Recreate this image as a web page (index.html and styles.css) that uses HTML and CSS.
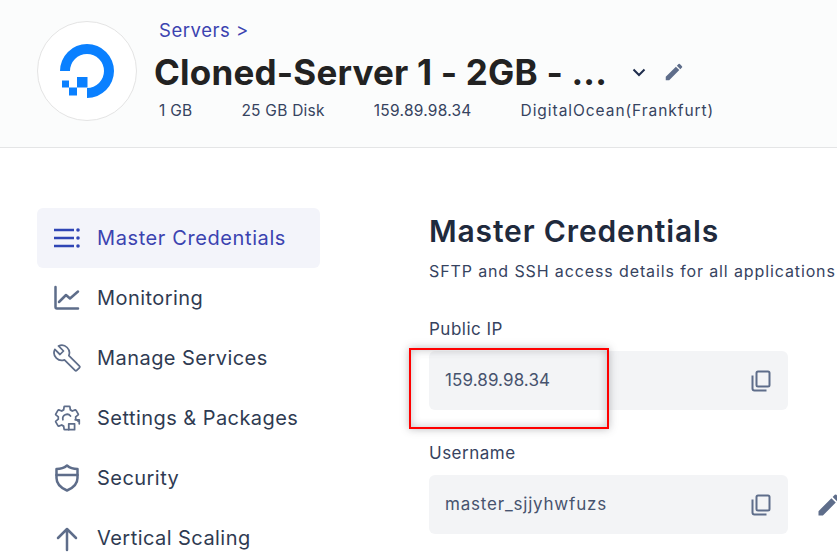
FILE: index.html
```html
<!DOCTYPE html>
<html lang="en">
<head>
    <meta charset="UTF-8">
    <meta name="viewport" content="width=device-width, initial-scale=1.0">
    <title>Master Credentials</title>
    <link rel="stylesheet" href="styles.css">
</head>
<body>
    <header class="server-header">
        <div class="logo-circle">
            <svg class="logo" viewBox="0 0 54 54">
                <path d="M0 27A27 27 0 1 1 27 54V44A17 17 0 1 0 10 27Z"/>
                <rect x="17" y="33" width="10.5" height="10.5"/>
                <rect x="9" y="43.5" width="8" height="8"/>
                <rect x="2" y="36.5" width="7" height="7"/>
            </svg>
        </div>
        <div class="server-info">
            <a class="breadcrumb">Servers &gt;</a>
            <div class="title-row">
                <h1 class="server-name">Cloned-Server 1 - 2GB - ...</h1>
                <svg class="chevron" viewBox="0 0 14 9"><path d="M1.5 1.5L7 7l5.5-5.5"/></svg>
                <svg class="pencil pencil-small" viewBox="0 0 24 24"><path d="M3 17.25V21h3.75L17.81 9.94l-3.75-3.75L3 17.25zM20.71 7.04a1 1 0 0 0 0-1.41l-2.34-2.34a1 1 0 0 0-1.41 0l-1.83 1.83 3.75 3.75 1.83-1.83z"/></svg>
            </div>
            <div class="meta">
                <span>1 GB</span>
                <span>25 GB Disk</span>
                <span>159.89.98.34</span>
                <span class="provider">DigitalOcean(Frankfurt)</span>
            </div>
        </div>
    </header>

    <div class="content">
        <nav class="sidebar">
            <a class="nav-item active">
                <svg class="nav-icon" viewBox="0 0 28 28"><path d="M1 6h20M1 14h20M1 22h20"/><circle class="dot" cx="25" cy="6" r="1.8"/><circle class="dot" cx="25" cy="14" r="1.8"/><circle class="dot" cx="25" cy="22" r="1.8"/></svg>
                Master Credentials
            </a>
            <a class="nav-item">
                <svg class="nav-icon" viewBox="0 0 28 28"><path d="M2.500 3v20a1.500 1.500 0 0 0 1.500 1.500h21"/><path d="M6 18l7-7 4 3.500 8-7"/></svg>
                Monitoring
            </a>
            <a class="nav-item">
                <svg class="nav-icon" viewBox="0 0 24 24"><path class="thin" d="M22.700 19l-9.100-9.100c.9-2.300.4-5-1.500-6.900-2-2-5-2.400-7.400-1.300L9 6 6 9 1.600 4.700C.4 7.100.9 10.100 2.900 12.100c1.900 1.900 4.600 2.400 6.900 1.500l9.100 9.100c.4.4 1 .4 1.400 0l2.300-2.300c.5-.4.5-1.100.1-1.400z"/></svg>
                Manage Services
            </a>
            <a class="nav-item">
                <svg class="nav-icon" viewBox="0 0 24 24">
                    <path class="thin" d="M19.430 12.980c.04-.32.07-.64.07-.98s-.03-.66-.07-.98l2.110-1.650c.19-.15.24-.42.12-.64l-2-3.460c-.12-.22-.39-.3-.61-.22l-2.490 1c-.52-.4-1.080-.73-1.690-.98l-.38-2.650C14.460 2.180 14.250 2 14 2h-4c-.25 0-.46.18-.49.42l-.38 2.650c-.61.25-1.170.59-1.690.98l-2.490-1c-.23-.09-.49 0-.61.22l-2 3.460c-.13.22-.07.49.12.64l2.110 1.650c-.04.32-.07.65-.07.98s.03.66.07.98l-2.110 1.650c-.19.15-.24.42-.12.64l2 3.460c.12.22.39.3.61.22l2.490-1c.52.4 1.080.73 1.690.98l.38 2.650c.03.24.24.42.49.42h4c.25 0 .46-.18.49-.42l.38-2.650c.61-.25 1.170-.59 1.690-.98l2.490 1c.23.09.49 0 .61-.22l2-3.460c.12-.22.07-.49-.12-.64l-2.110-1.650z"/>
                    <rect class="mask" x="14" y="15.500" width="10" height="8.500"/>
                    <path class="thin" d="M8.500 13.500a3.700 3.700 0 0 1 6.500-3.200"/>
                    <rect class="thin" x="13.500" y="17" width="5" height="5"/>
                    <path class="thin" d="M19 13.500h3.500v3.500"/>
                </svg>
                Settings &amp; Packages
            </a>
            <a class="nav-item">
                <svg class="nav-icon" viewBox="0 0 28 28"><path d="M14 1.500c3 2.500 7 3.500 10.500 3.500v9c0 6-4.500 10-10.500 12.500C8 24 3.500 20 3.500 14V5C7 5 11 4 14 1.500z"/><path d="M3.500 11h21"/></svg>
                Security
            </a>
            <a class="nav-item">
                <svg class="nav-icon" viewBox="0 0 28 28"><path d="M14 26V5M5 14l9-9 9 9"/></svg>
                Vertical Scaling
            </a>
        </nav>

        <main class="credentials">
            <h2 class="section-title">Master Credentials</h2>
            <p class="section-sub">SFTP and SSH access details for all applications</p>

            <label class="field-label">Public IP</label>
            <div class="field-row">
                <div class="field">
                    <span class="value-ip">159.89.98.34</span>
                    <svg class="copy" viewBox="0 0 20 22"><rect x="5.500" y="1.500" width="13" height="15" rx="1.500"/><path d="M1.500 5.500v13a2 2 0 0 0 2 2h12"/></svg>
                </div>
            </div>

            <label class="field-label">Username</label>
            <div class="field-row">
                <div class="field">
                    <span class="value-user">master_sjjyhwfuzs</span>
                    <svg class="copy" viewBox="0 0 20 22"><rect x="5.500" y="1.500" width="13" height="15" rx="1.500"/><path d="M1.500 5.500v13a2 2 0 0 0 2 2h12"/></svg>
                </div>
                <svg class="pencil pencil-large" viewBox="0 0 24 24"><path d="M3 17.250V21h3.750L17.810 9.940l-3.750-3.750L3 17.250zM20.710 7.040a1 1 0 0 0 0-1.410l-2.340-2.340a1 1 0 0 0-1.410 0l-1.830 1.830 3.750 3.750 1.830-1.830z"/></svg>
            </div>
        </main>
    </div>

    <div class="highlight"></div>
</body>
</html>
```

FILE: styles.css
```css
html, body {
    height: 100%;
    overflow: hidden;
}
body {
    margin: 0;
    position: relative;
    background-color: #fff;
    color: #2f3b52;
    font-family: Inter, "Liberation Sans", sans-serif;
}
.server-header {
    display: flex;
    height: 129px;
    padding: 18px 0 0 37px;
    background-color: #fbfcfc;
    border-bottom: 1px solid #e4e5e6;
}
.logo-circle {
    width: 98px;
    height: 98px;
    margin-top: 3px;
    border: 1px solid #e4e4e4;
    border-radius: 50%;
    background-color: #fff;
    display: flex;
    align-items: center;
    justify-content: center;
}
.logo {
    width: 54px;
    height: 54px;
    margin: 0 1px 0 0;
    fill: #0a80ff;
}
.server-info {
    margin-left: 17px;
}
.breadcrumb {
    display: block;
    margin-left: 5px;
    line-height: 24px;
    font-size: 18.500px;
    letter-spacing: 0.55px;
    color: #3b43b0;
}
.title-row {
    display: flex;
    align-items: center;
    margin-top: 5px;
    height: 50px;
}
.server-name {
    margin: 0;
    width: 478px;
    font-size: 35px;
    font-weight: 700;
    letter-spacing: 0.2px;
    color: #222;
    white-space: nowrap;
}
.chevron {
    width: 14px;
    height: 9px;
    fill: none;
    stroke: #1f2d4d;
    stroke-width: 2;
}
.pencil {
    fill: #5e6d8a;
}
.pencil-small {
    width: 22px;
    height: 22px;
    margin-left: 17px;
}
.meta {
    display: flex;
    gap: 49px;
    margin: 2px 0 0 5px;
    line-height: 24px;
    font-size: 15.500px;
    letter-spacing: 0.25px;
    color: #36435f;
    white-space: nowrap;
}
.meta .provider {
    letter-spacing: 0.95px;
}
.content {
    display: flex;
    padding: 60px 0 0 37px;
}
.sidebar {
    flex: none;
    width: 283px;
    margin-right: 109px;
}
.nav-item {
    display: flex;
    align-items: center;
    height: 60px;
    padding-left: 16px;
    font-size: 20px;
    letter-spacing: 0.45px;
    color: #2f3b52;
    border-radius: 6px;
}
.nav-item.active {
    background-color: #f3f4fa;
    color: #3b43b0;
    letter-spacing: 0.6px;
}
.nav-icon {
    flex: none;
    width: 28px;
    height: 28px;
    margin-right: 16px;
    fill: none;
    stroke: #5e6d8a;
    stroke-width: 2.500;
    stroke-linecap: round;
    stroke-linejoin: round;
}
.nav-icon .thin {
    stroke-width: 1.500;
}
.nav-icon .mask {
    fill: #fff;
    stroke: none;
}
.nav-item.active .nav-icon {
    stroke: #2f45b5;
    stroke-linecap: butt;
}
.nav-icon .dot {
    fill: #2f45b5;
    stroke: none;
}
.credentials {
    flex: none;
    width: 408px;
    padding-top: 3px;
}
.section-title {
    margin: 0 0 8px;
    line-height: 40px;
    font-size: 30px;
    font-weight: 600;
    letter-spacing: 0.85px;
    color: #1f2a3d;
}
.section-sub {
    margin: 0 0 34px;
    line-height: 24px;
    font-size: 16px;
    letter-spacing: 0.88px;
    color: #36435f;
    white-space: nowrap;
}
.field-label {
    display: block;
    margin-bottom: 10px;
    line-height: 24px;
    font-size: 17px;
    letter-spacing: 0.5px;
    color: #36435f;
}
.field-row {
    display: flex;
    align-items: center;
    margin-bottom: 31px;
}
.field {
    flex: none;
    width: 359px;
    height: 59px;
    box-sizing: border-box;
    padding: 0 18px 0 16px;
    display: flex;
    align-items: center;
    justify-content: space-between;
    background-color: #f3f4f6;
    border-radius: 6px;
    font-size: 17px;
    color: #47536e;
}
.field span {
    margin-bottom: 2px;
}
.value-ip {
    letter-spacing: 0.1px;
}
.value-user {
    letter-spacing: 0.8px;
}
.copy {
    width: 20px;
    height: 22px;
    margin-right: -1px;
    fill: none;
    stroke: #5e6d8a;
    stroke-width: 2;
}
.pencil-large {
    flex: none;
    width: 28px;
    height: 28px;
    margin-left: 27px;
}
.highlight {
    position: absolute;
    left: 409px;
    top: 348px;
    width: 196px;
    height: 77px;
    border: 2px solid #f00;
    box-shadow: 0 0 8px rgba(60, 60, 70, 0.35), inset 0 0 8px rgba(60, 60, 70, 0.3);
}
```
